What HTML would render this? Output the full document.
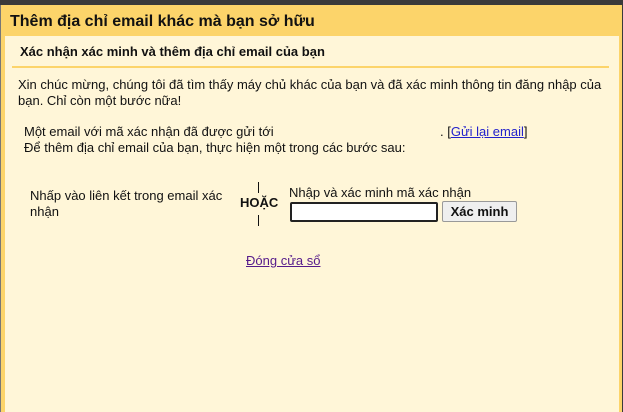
<!DOCTYPE html>
<html><head><meta charset="utf-8"><style>
html,body{margin:0;padding:0;width:623px;height:412px;overflow:hidden;background:#3a3a3a;font-family:"Liberation Sans",Arial,sans-serif;color:#111;}
#f{position:absolute;left:0;top:5px;width:621px;height:407px;background:#fcd46a;border-left:1px solid #777;}
#c{position:absolute;left:5px;top:36px;width:614px;height:376px;background:#fff6d8;}
.a{position:absolute;font-size:13px;white-space:nowrap;line-height:16px;}
a{color:#2222cc;}
</style></head><body>
<div id="f"></div>
<div id="c"></div>
<div class="a" style="left:10px;top:13px;font-size:16px;font-weight:bold;line-height:18px">Thêm địa chỉ email khác mà bạn sở hữu</div>
<div class="a" style="left:20px;top:44px;font-weight:bold">Xác nhận xác minh và thêm địa chỉ email của bạn</div>
<div style="position:absolute;left:12px;top:66px;width:597px;height:2px;background:#fcd46a"></div>
<div class="a" style="left:18px;top:77px">Xin chúc mừng, chúng tôi đã tìm thấy máy chủ khác của bạn và đã xác minh thông tin đăng nhập của<br>bạn. Chỉ còn một bước nữa!</div>
<div class="a" style="left:24px;top:124px">Một email với mã xác nhận đã được gửi tới</div>
<div class="a" style="left:440px;top:124px">. [<a href="#">Gửi lại email</a>]</div>
<div class="a" style="left:24px;top:140px">Để thêm địa chỉ email của bạn, thực hiện một trong các bước sau:</div>
<div class="a" style="left:30px;top:188px">Nhấp vào liên kết trong email xác<br>nhận</div>
<div style="position:absolute;left:258px;top:182px;width:1px;height:11px;background:#111"></div>
<div style="position:absolute;left:258px;top:215px;width:1px;height:11px;background:#111"></div>
<div class="a" style="left:240px;top:195px;font-weight:bold;font-size:13px">HOẶC</div>
<div class="a" style="left:289px;top:185px">Nhập và xác minh mã xác nhận</div>
<div style="position:absolute;left:290px;top:202px;width:144px;height:16px;border:2px solid #222;border-radius:2px;background:#fff"></div>
<div style="position:absolute;left:442px;top:201px;width:73px;height:19px;border:1px solid #999;border-radius:2px;background:#efefef;font-size:13px;font-weight:bold;text-align:center;line-height:19px">Xác minh</div>
<div class="a" style="left:246px;top:253px"><a href="#" style="color:#551a8b">Đóng cửa sổ</a></div>
</body></html>
